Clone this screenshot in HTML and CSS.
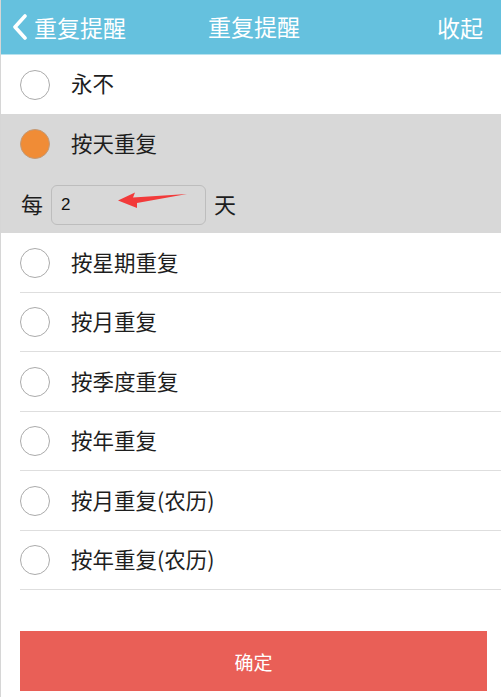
FILE: index.html
```html
<!DOCTYPE html>
<html lang="zh">
<head>
<meta charset="utf-8">
<link rel="stylesheet" href="styles.css">
</head>
<body>
<div class="page">
  <header class="topbar">
    <div class="back">
      <svg class="chev" width="16" height="26" viewBox="0 0 16 26"><path d="M13 2 L3 13 L13 24" fill="none" stroke="#fff" stroke-width="3.6" stroke-linecap="round" stroke-linejoin="round"/></svg>
      <span>重复提醒</span>
    </div>
    <div class="title">重复提醒</div>
    <div class="collapse">收起</div>
  </header>
  <ul class="list">
    <li class="row first"><span class="radio"></span><span class="label">永不</span></li>
    <li class="selected">
      <div class="row sel-row"><span class="radio on"></span><span class="label">按天重复</span></div>
      <div class="every">
        <span class="unit">每</span>
        <div class="field">
          <span class="val">2</span>
          <svg class="arrow" width="72" height="18" viewBox="0 0 72 18"><polygon points="0,8.5 17,0.5 15,5.5 69,2 19,11 19,16" fill="#f23a3a"/></svg>
        </div>
        <span class="unit">天</span>
      </div>
    </li>
    <li class="row line"><span class="radio"></span><span class="label">按星期重复</span></li>
    <li class="row line"><span class="radio"></span><span class="label">按月重复</span></li>
    <li class="row line"><span class="radio"></span><span class="label">按季度重复</span></li>
    <li class="row line"><span class="radio"></span><span class="label">按年重复</span></li>
    <li class="row line"><span class="radio"></span><span class="label">按月重复(农历)</span></li>
    <li class="row line"><span class="radio"></span><span class="label">按年重复(农历)</span></li>
  </ul>
  <div class="actions">
    <button class="ok">确定</button>
  </div>
</div>
</body>
</html>
```
FILE: styles.css
```css
html, body {
  margin: 0;
  padding: 0;
  background: #fff;
}
body {
  font-family: "Noto Sans CJK SC", "Noto Sans", sans-serif;
  color: #1e1e1e;
}
.page {
  width: 501px;
  height: 697px;
  box-sizing: border-box;
  border-left: 1px solid #d6d6d6;
  overflow: hidden;
}
.topbar {
  height: 54px;
  background: #65c1de;
  border-bottom: 1px solid #b7e2ee;
  display: flex;
  align-items: center;
  justify-content: space-between;
  color: #fff;
  font-size: 23px;
  padding: 0 18px 0 11px;
  position: relative;
}
.back {
  display: flex;
  align-items: center;
  gap: 6px;
}
.back span { line-height: 1; }
.chev { display: block; }
.title {
  position: absolute;
  left: 207px;
  top: 0;
  line-height: 52px;
}
.collapse { line-height: 1; }
.list {
  list-style: none;
  margin: 0;
  padding: 0;
}
.row {
  height: 59px;
  display: flex;
  align-items: center;
  padding-left: 19px;
  box-sizing: border-box;
}
.row.line {
  height: 59.5px;
  position: relative;
}
.row.line::after {
  content: "";
  position: absolute;
  left: 19px;
  right: 0;
  bottom: 0;
  height: 1px;
  background: #dedede;
}
.radio {
  width: 30px;
  height: 30px;
  box-sizing: border-box;
  border-radius: 50%;
  border: 1.5px solid #ababab;
  background: #fff;
  flex: none;
}
.radio.on {
  background: #f08c36;
  border-color: #c29a78;
}
.label {
  margin-left: 21px;
  margin-bottom: 3px;
  font-size: 21.5px;
  line-height: 1;
}
.selected {
  background: #d8d8d8;
  height: 119px;
}
.sel-row { height: 60px; }
.every {
  height: 59px;
  display: flex;
  align-items: center;
  padding-left: 20px;
  gap: 8px;
}
.unit {
  font-size: 22px;
  line-height: 1;
  margin-bottom: 1px;
}
.field {
  width: 155px;
  height: 40px;
  box-sizing: border-box;
  border: 1px solid #bdbdbd;
  border-radius: 6px;
  display: flex;
  align-items: center;
  padding-left: 9px;
  margin-top: 2px;
  position: relative;
}
.val {
  font-family: "Liberation Sans", Arial, sans-serif;
  font-size: 17px;
  color: #111;
}
.arrow {
  position: absolute;
  left: 66px;
  top: 6px;
}
.actions {
  padding: 41px 14px 0 19px;
}
.ok {
  display: block;
  width: 100%;
  height: 60px;
  border: none;
  background: #e95f57;
  color: #fff;
  font-family: "Noto Sans CJK SC", "Noto Sans", sans-serif;
  font-size: 19px;
  padding: 0;
}
```
